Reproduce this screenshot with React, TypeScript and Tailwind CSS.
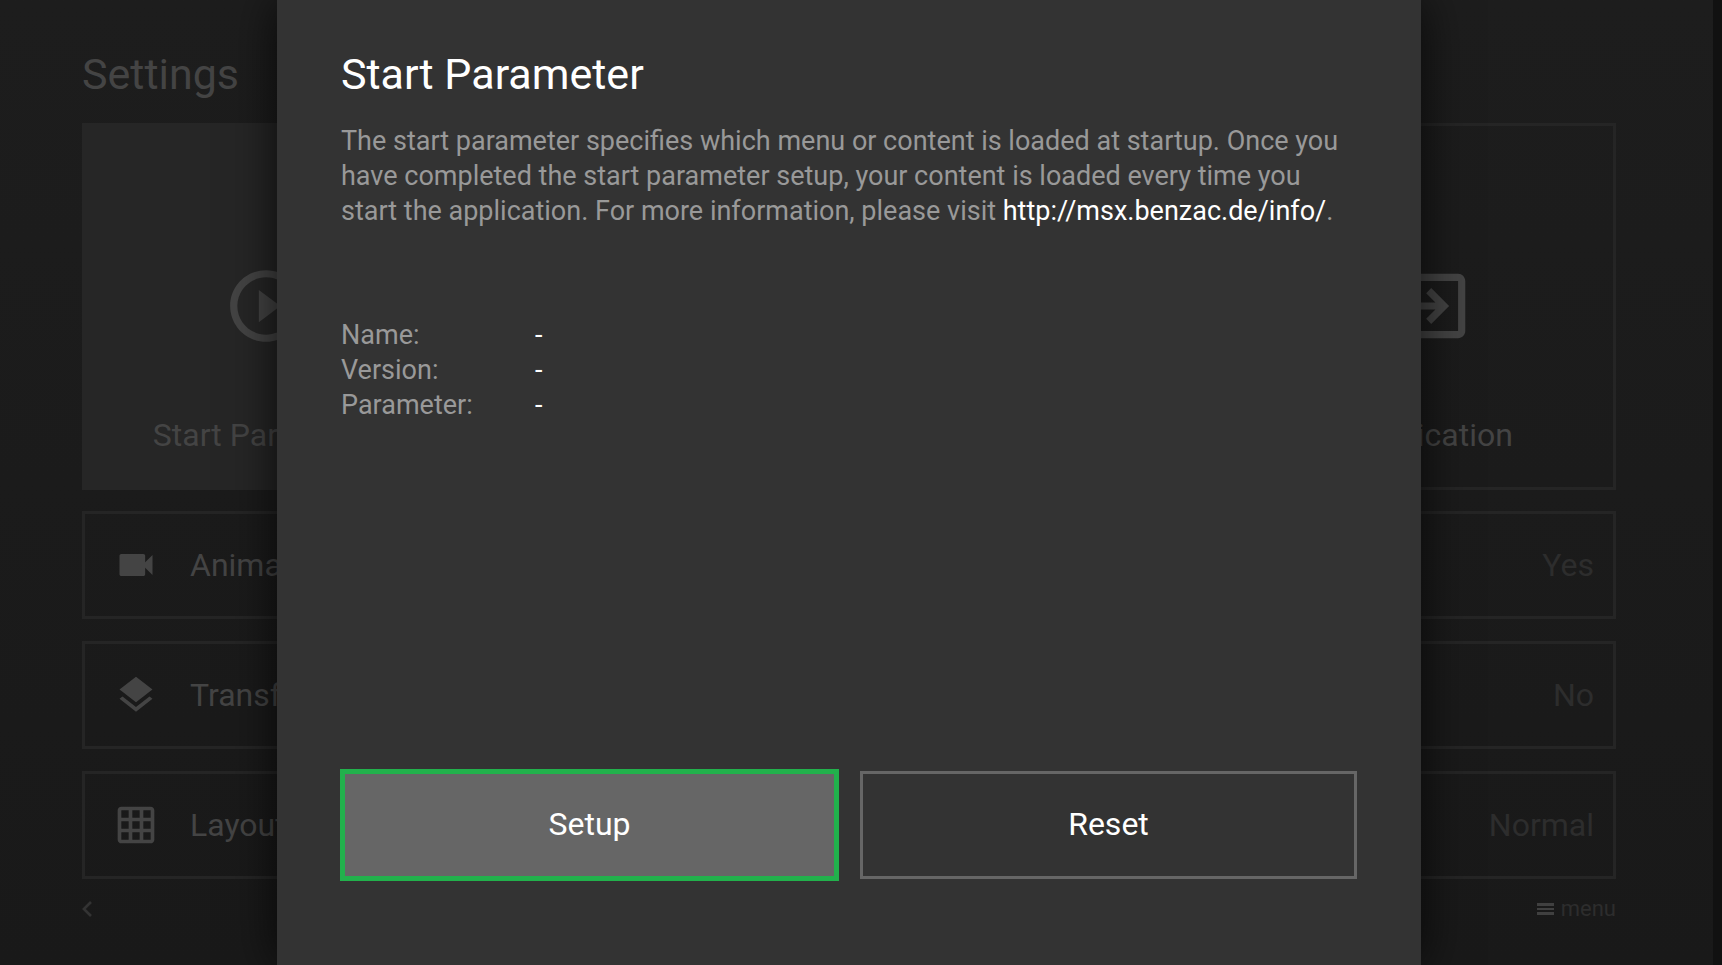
import type { IconType } from 'react-icons';
import { MdExitToApp, MdGridOn, MdLayers, MdPlayCircleOutline, MdVideocam } from 'react-icons/md';

interface SettingRow {
  label: string;
  value: string;
  icon: IconType;
}

const settings: SettingRow[] = [
  { label: 'Animations', value: 'Yes', icon: MdVideocam },
  { label: 'Transformations', value: 'No', icon: MdLayers },
  { label: 'Layout', value: 'Normal', icon: MdGridOn },
];

const details = [
  { name: 'Name:', value: '-' },
  { name: 'Version:', value: '-' },
  { name: 'Parameter:', value: '-' },
];

function SettingsPage() {
  return (
    <main className="flex min-h-screen flex-col bg-linear-to-b from-[#1d1d1d] to-[#191919] pr-[97px] pl-[82px] text-[#444444]">
      <h1 className="pt-[48px] text-[43px] leading-[52px]">Settings</h1>

      <div className="mt-[23px] grid grid-cols-4 gap-[22px] text-[32px] leading-[38px]">
        <button className="flex h-[367px] flex-col items-center bg-[#262626] pt-[140px]">
          <MdPlayCircleOutline className="size-[86px]" />
          <span className="mt-[67px]">Start Parameter</span>
        </button>
        <button className="col-start-4 flex h-[367px] flex-col items-center border-[3px] border-[#252525] pt-[137px]">
          <MdExitToApp className="size-[86px]" />
          <span className="mt-[67px]">Application</span>
        </button>
      </div>

      <div className="mt-[21px] flex flex-col gap-[22px] text-[32px] leading-[38px]">
        {settings.map((item) => (
          <button
            key={item.label}
            className="flex h-[108px] items-center border-[3px] border-[#252525] pr-[19px] pl-[29px]"
          >
            <item.icon className="size-[44px]" />
            <span className="ml-[32px]">{item.label}</span>
            <span className="ml-auto text-[#2d2d2d]">{item.value}</span>
          </button>
        ))}
      </div>

      <footer className="mt-[16px] flex items-center justify-between text-[22px] leading-[28px]">
        <button aria-label="Back">
          <svg viewBox="8 6 7.41 12" className="h-[16px] w-[10px]" fill="#333333">
            <path d="M15.41 7.41L14 6l-6 6 6 6 1.41-1.41L10.83 12z" />
          </svg>
        </button>
        <button className="flex items-center gap-[7px] text-[#2d2d2d]">
          <svg viewBox="0 0 17 12" className="h-[12px] w-[17px]" fill="#404040">
            <path d="M0 0h17v3H0zM0 5h17v2H0zM0 9h17v3H0z" />
          </svg>
          menu
        </button>
      </footer>
    </main>
  );
}

function StartParameterPanel() {
  return (
    <div
      role="dialog"
      aria-labelledby="panel-title"
      className="flex w-[1144px] max-w-full flex-col bg-[#333333] px-[64px] pt-[48px] pb-[86px] shadow-[0_0_45px_rgba(0,0,0,0.75)]"
    >
      <h2 id="panel-title" className="text-[43px] leading-[52px] text-white">
        Start Parameter
      </h2>
      <p className="mt-[24px] text-[27px] leading-[35px] text-[#999999]">
        The start parameter specifies which menu or content is loaded at startup. Once you have completed the start
        parameter setup, your content is loaded every time you start the application. For more information, please
        visit{' '}
        <a href="http://msx.benzac.de/info/" className="text-white">
          http://msx.benzac.de/info/
        </a>
        .
      </p>

      <dl className="mt-[89px] text-[27px] leading-[35px] text-[#999999]">
        {details.map((row) => (
          <div key={row.name} className="flex">
            <dt className="w-[194px]">{row.name}</dt>
            <dd className="text-white">{row.value}</dd>
          </div>
        ))}
      </dl>

      <div className="mt-auto grid h-[108px] grid-cols-2 gap-[22px] text-[32px] leading-[38px] text-white">
        <button className="-mx-px -my-[2px] border-[5px] border-[#22b14c] bg-[#666666] pb-[2px]">Setup</button>
        <button className="border-[3px] border-[#666666] pb-[2px]">Reset</button>
      </div>
    </div>
  );
}

export default function App() {
  return (
    <div className="flex min-h-screen bg-[#111111] pr-[9px] font-[Roboto,sans-serif]">
      <div className="relative flex-1 overflow-hidden">
        <SettingsPage />
        {/* Panel slides over the settings and takes the full height */}
        <div className="absolute inset-0 flex justify-center pr-[97px] pl-[82px]">
          <StartParameterPanel />
        </div>
      </div>
    </div>
  );
}
